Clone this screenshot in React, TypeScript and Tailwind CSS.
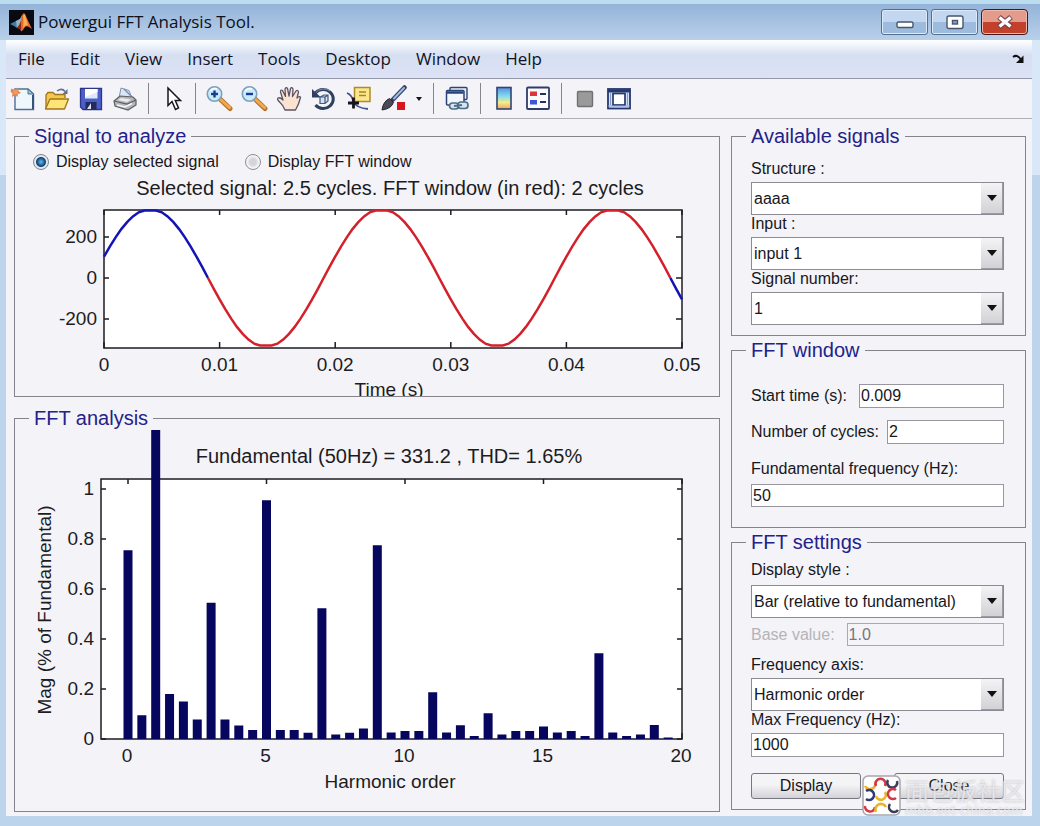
import type { ReactNode } from "react";

const menus = ["File", "Edit", "View", "Insert", "Tools", "Desktop", "Window", "Help"];

// Magnitudes in % of the fundamental, one every half harmonic
const bars = [
  0.755, 0.095, 1.236, 0.18, 0.15, 0.078, 0.545, 0.078, 0.054, 0.036, 0.955,
  0.036, 0.036, 0.025, 0.523, 0.018, 0.025, 0.042, 0.775, 0.026, 0.032, 0.032,
  0.187, 0.026, 0.055, 0.012, 0.103, 0.018, 0.032, 0.032, 0.05, 0.026, 0.032,
  0.012, 0.343, 0.026, 0.012, 0.018, 0.056, 0.006,
];

const MatlabLogo = () => (
  <svg viewBox="0 0 25 25" className="h-[25px] w-[25px] shrink-0">
    <rect width="25" height="25" fill="#0a0a12" />
    <path d="M1 14 L7 11 L11 9 L14 4 L11 13 L8 18 L5 16Z" fill="#3f7fa6" />
    <path d="M7 11 L11 9 L13 5 L12 13 L8 18Z" fill="#8fb9c9" />
    <path d="M8 18 Q12 12 13 6 Q14 2 16 4 Q19 11 23 19 Q18 15 16 17 Q13 22 12 21 Q11 18 8 18Z" fill="#e8682a" />
    <path d="M14 6 Q15 3 16 5 Q18 11 19 15 Q16 15 14 18 Q15 12 14 6Z" fill="#f9b050" />
    <path d="M8 18 Q11 15 12 11 L12 20 Q11 18 8 18Z" fill="#8a2318" />
  </svg>
);

const ToolButton = ({ label, children }: { label: string; children: ReactNode }) => (
  <button aria-label={label} className="flex h-8 w-[34px] items-center justify-center">
    <svg viewBox="0 0 28 28" className="h-7 w-7" fill="none">
      {children}
    </svg>
  </button>
);

const Separator = () => <div className="mx-1.5 h-[31px] w-px bg-[#85858c]" />;

const Magnifier = ({ plus }: { plus?: boolean }) => (
  <>
    <path d="M15 14 L25 23.5" stroke="#b8702a" strokeWidth="5" strokeLinecap="round" />
    <path d="M15 14 L24.6 22.7" stroke="#f0a94e" strokeWidth="3" strokeLinecap="round" />
    <circle cx="9.5" cy="9" r="7.2" fill="#c9ecf8" stroke="#7aa2bf" strokeWidth="1.6" />
    <path d="M5 6 Q8 2.500 12 4" stroke="#fff" strokeWidth="1.500" />
    <path d="M6 9 H13" stroke="#183c94" strokeWidth="2.4" />
    {plus && <path d="M9.500 5.500 V12.500" stroke="#183c94" strokeWidth="2.4" />}
  </>
);

const Toolbar = () => (
  <div className="flex h-10 items-center border-b border-[#aeb0b6]">
    <div className="flex">
      <ToolButton label="New Figure">
        <path d="M6 4 H19 L24.500 9 V24.500 H6Z" fill="#eef8fc" stroke="#4d6f94" strokeWidth="1.400" />
        <path d="M19 4 V9 H24.500Z" fill="#9fc4dc" stroke="#4d6f94" />
        <path d="M24 10 V24" stroke="#35527c" strokeWidth="2" />
        <path d="M2.500 3.500 L6 5 L9 2.500 L9.500 6 L12 8 L9 9 L8.500 12 L6 10 L3 12 L3.500 8.500 L1.500 6.500Z" fill="#e5824a" />
        <circle cx="6.500" cy="7" r="2.500" fill="#ef9a63" />
      </ToolButton>
      <ToolButton label="Open File">
        <path d="M3 23 V10 L5 7.500 H10 L12 9.500 H22 V13" fill="#f6c84a" stroke="#a3741b" strokeWidth="1.300" />
        <path d="M2.500 24 L7 14 H25.500 L21.500 24Z" fill="#ffe477" stroke="#a3741b" strokeWidth="1.300" strokeLinejoin="round" />
        <path d="M14 6 Q19 2.500 22 6.500" stroke="#5f7192" strokeWidth="1.500" />
        <path d="M24.500 4 V9 H19.500Z" fill="#5f7192" />
      </ToolButton>
      <ToolButton label="Save Figure">
        <path d="M3.500 3.500 H24.500 V24.500 H6 L3.500 22Z" fill="#4c5fc9" stroke="#2c358c" strokeWidth="1.300" />
        <rect x="8" y="4" width="12.500" height="9.500" fill="#dfeaf9" />
        <path d="M8 4 H20.500 V7 L8 12Z" fill="#fff" />
        <rect x="8.500" y="17" width="11" height="7.500" fill="#232b5c" />
        <path d="M10 24 L14 18 V24Z" fill="#dbe3f5" />
      </ToolButton>
      <ToolButton label="Print Figure">
        <path d="M8 13 L10 3 L18 5.500 L21 13Z" fill="#d9e8f8" stroke="#8791a8" />
        <path d="M13 4 L21 12" stroke="#7d8fb4" strokeWidth="1.500" />
        <path d="M3 16 L9 11 L22 12 L25 15 V20 L17 25 L4 21Z" fill="#b5b6bb" stroke="#5d5e66" strokeWidth="1.200" />
        <path d="M3 16 L16 19 L25 15" stroke="#5d5e66" strokeWidth="1.200" />
        <path d="M10 13 L20 14.500 L16 17 L7 15Z" fill="#ececef" />
        <path d="M6 20 L14 22 L21 18.500" stroke="#f7f7f7" strokeWidth="1.500" />
      </ToolButton>
    </div>
    <Separator />
    <ToolButton label="Edit Plot">
      <path d="M10 3 V20.500 L14 16.500 L17.500 24.500 L20.500 23 L17.300 15.500 H22.500Z" fill="#fff" stroke="#16161c" strokeWidth="1.500" />
    </ToolButton>
    <Separator />
    <div className="flex gap-px">
      <ToolButton label="Zoom In">
        <Magnifier plus />
      </ToolButton>
      <ToolButton label="Zoom Out">
        <Magnifier />
      </ToolButton>
      <ToolButton label="Pan">
        <path
          d="M10 25 Q8 20 5 17.500 Q1.500 14 3 13 Q5 12 8 15 L5.500 7 Q5.500 4.500 7.500 5.500 L10.500 11.500 L10 4 Q11 1.500 12.500 3.500 L14 11 L15.500 3.500 Q17 1.500 18 4 L17.500 11.500 L21 6 Q23 4.500 23.500 7 L22 13 Q25 10.500 25.500 12.500 Q24 19 20.500 25Z"
          fill="#fbe3d2" stroke="#5c5466" strokeWidth="1.300" strokeLinejoin="round"
        />
      </ToolButton>
      <ToolButton label="Rotate 3D">
        <path d="M5.500 8 A10 9.500 0 1 1 5.500 20" stroke="#2f405f" strokeWidth="3" />
        <path d="M5.500 8 A10 9.500 0 0 1 20 6" stroke="#8492ae" strokeWidth="1" />
        <path d="M2 4 V12.500 H11Z" fill="#2f405f" />
        <path d="M10 12 L14 10 H18 V16 L15 18.500 H10Z M10 12 H15 V18.500 M15 12 L18 10" fill="#d4e0f2" stroke="#43587f" strokeWidth="1.200" />
      </ToolButton>
      <ToolButton label="Data Cursor">
        <path d="M2 8 Q7 10 8 16 Q11 23 23 24" stroke="#44558a" strokeWidth="1.800" />
        <rect x="9.500" y="2.500" width="15.500" height="14" fill="#fbe78a" stroke="#b08a2a" strokeWidth="1.500" />
        <path d="M14 7 H21 M14 10.500 H21" stroke="#a8842f" strokeWidth="1.500" />
        <path d="M8.500 12.500 V23.500 M3 18 H14" stroke="#15151d" strokeWidth="2.800" />
      </ToolButton>
      <ToolButton label="Brush Data">
        <path d="M24.500 2.500 L13 14.500" stroke="#30446c" strokeWidth="4.500" strokeLinecap="round" />
        <path d="M24 3 L14 13.500" stroke="#a4b9dc" strokeWidth="2" strokeLinecap="round" />
        <path d="M2 25 Q3 16.500 9.500 13.500 L13.500 17 Q12 23.500 2 25Z" fill="#4b4b55" stroke="#24242c" />
        <rect x="17" y="17" width="8" height="8" fill="#d8151c" />
      </ToolButton>
    </div>
    <button aria-label="Brush options" className="flex h-8 w-4 items-center justify-center">
      <svg viewBox="0 0 6 4" className="h-1 w-1.5">
        <path d="M0 0 H6 L3 4Z" fill="#15151d" />
      </svg>
    </button>
    <Separator />
    <ToolButton label="Link Plot">
      <rect x="7" y="2.500" width="17" height="12" rx="1" fill="#e8f1fb" stroke="#2c4475" strokeWidth="1.400" />
      <rect x="3.500" y="5.500" width="17.500" height="14.500" rx="1" fill="#f1f7fd" stroke="#2c4475" strokeWidth="1.500" />
      <path d="M4 7.500 H20.500" stroke="#2c4475" strokeWidth="2.500" />
      <rect x="6.500" y="18" width="9" height="6" rx="3" fill="#d7e6ee" stroke="#4d6e88" strokeWidth="1.700" />
      <rect x="15" y="17" width="10" height="6.500" rx="3" fill="#d7e6ee" stroke="#4d6e88" strokeWidth="1.700" />
      <path d="M11 21 L19 20" stroke="#4d6e88" strokeWidth="1.800" />
    </ToolButton>
    <Separator />
    <ToolButton label="Insert Colorbar">
      <defs>
        <linearGradient id="colorbar" x1="0" y1="0" x2="0" y2="1">
          <stop offset="0" stopColor="#5b8fe0" />
          <stop offset="0.4" stopColor="#7fdcf0" />
          <stop offset="0.7" stopColor="#f6ec8a" />
          <stop offset="1" stopColor="#f2a364" />
        </linearGradient>
      </defs>
      <rect x="7" y="2.500" width="14" height="21.500" fill="url(#colorbar)" stroke="#2f4472" strokeWidth="1.600" />
    </ToolButton>
    <ToolButton label="Insert Legend">
      <rect x="3" y="2.500" width="22" height="21.500" rx="1" fill="#fafbff" stroke="#2f3c66" strokeWidth="1.800" />
      <rect x="6" y="6.500" width="7" height="4.500" fill="#e0343c" />
      <rect x="6" y="15" width="7" height="4.500" fill="#3e55d8" />
      <path d="M16 9 H22 M16 17 H22" stroke="#26305a" strokeWidth="1.800" />
    </ToolButton>
    <Separator />
    <ToolButton label="Hide Plot Tools">
      <rect x="6.500" y="6.500" width="15" height="15" rx="1" fill="#9a9a9a" stroke="#707072" strokeWidth="1.400" />
    </ToolButton>
    <ToolButton label="Show Plot Tools">
      <rect x="3" y="4" width="22" height="19.500" fill="#dfe8fa" stroke="#24386f" strokeWidth="1.800" />
      <path d="M3 6 H25" stroke="#24386f" strokeWidth="3" />
      <rect x="8" y="8.500" width="12" height="11.500" fill="#fff" stroke="#24386f" strokeWidth="1.700" />
      <path d="M3 21 H25 M5.500 8 V20 M22.500 8 V20" stroke="#8398cb" strokeWidth="1.200" />
    </ToolButton>
  </div>
);

const TitleBar = () => (
  <header className="flex h-10 items-center border-t-4 border-[#bcdcf0] bg-linear-to-b from-[#94b3d8] to-[#b9d0ea] pr-3 pl-[9px]">
    <MatlabLogo />
    <h1 className="ml-1 flex-1 font-['Open_Sans',sans-serif] text-[17px] leading-6 text-[#0c1020]">
      Powergui FFT Analysis Tool.
    </h1>
    <div className="flex gap-[3px]">
      <button aria-label="Minimize" className="flex h-[26px] w-[47px] items-center justify-center rounded-[3px] border border-[#54708f] bg-linear-to-b from-[#c3d8f0] from-50% to-[#9dbbdc] to-50% shadow-[inset_0_0_0_1px_#dcebf9]">
        <svg viewBox="0 0 18 18" className="h-[18px] w-[18px]">
          <rect x="1" y="9" width="16" height="5.500" rx="1.500" fill="#fff" stroke="#47566d" strokeWidth="1.400" />
        </svg>
      </button>
      <button aria-label="Maximize" className="flex h-[26px] w-[47px] items-center justify-center rounded-[3px] border border-[#54708f] bg-linear-to-b from-[#c3d8f0] from-50% to-[#9dbbdc] to-50% shadow-[inset_0_0_0_1px_#dcebf9]">
        <svg viewBox="0 0 18 18" className="h-[18px] w-[18px]">
          <rect x="1" y="3" width="16" height="12.500" rx="2" fill="#fff" stroke="#47566d" strokeWidth="1.400" />
          <rect x="6.500" y="7.500" width="5" height="3.500" fill="#8aa5c6" stroke="#47566d" strokeWidth="1.400" />
        </svg>
      </button>
      <button aria-label="Close window" className="flex h-[26px] w-[47px] items-center justify-center rounded-[4px] border border-[#4a1717] bg-linear-to-b from-[#e39b8c] from-50% to-[#c2402c] to-50% shadow-[inset_0_0_0_1px_#f0b9ac]">
        <svg viewBox="0 0 18 18" className="h-[18px] w-[18px]">
          <path d="M3 4 L15 14 M15 4 L3 14" stroke="#6b4048" strokeWidth="5.500" />
          <path d="M3.500 4.500 L14.500 13.500 M14.500 4.500 L3.500 13.500" stroke="#fff" strokeWidth="3.500" />
        </svg>
      </button>
    </div>
  </header>
);

const MenuBar = () => (
  <nav className="flex h-[39px] items-center justify-between border-b border-[#9297a6] bg-linear-to-b from-white via-[#d6dff1] via-40% to-[#dde2f6] pr-2 pl-3 font-['Open_Sans',sans-serif] text-[17px] leading-6 text-[#10131f]">
    <div className="flex gap-[25px]">
      {menus.map((menu) => (
        <button key={menu}>{menu}</button>
      ))}
    </div>
    <button aria-label="Dock figure">
      <svg viewBox="0 0 12 10" className="h-2.5 w-3" fill="none">
        <path d="M1 3 Q5 0 8.500 5" stroke="#111" strokeWidth="2" />
        <path d="M11.500 1.500 V9 H4Z" fill="#111" />
      </svg>
    </button>
  </nav>
);

const Panel = ({ title, className, children }: { title: string; className?: string; children: ReactNode }) => (
  <fieldset className={`min-w-0 border border-[#85848c] ${className ?? ""}`}>
    <legend className="ml-[14px] px-[5px] text-[20px] leading-5 text-[#22228a]">{title}</legend>
    {children}
  </fieldset>
);

const Select = ({ id, value }: { id: string; value: string }) => (
  <div className="relative">
    <select
      id={id}
      defaultValue={value}
      className="block h-[33px] w-full appearance-none border border-[#8c8b93] bg-white pr-6 pl-0.5"
    >
      <option>{value}</option>
    </select>
    <span className="pointer-events-none absolute inset-y-px right-px flex w-[22px] items-center justify-center border-r border-b border-[#9b9ba1] bg-linear-to-b from-[#f4f4f6] to-[#d2d2d6]">
      <svg viewBox="0 0 10 6" className="h-1.5 w-2.5">
        <path d="M0 0 H10 L5 6Z" fill="#111" />
      </svg>
    </span>
  </div>
);

const signalAt = (t: number) => {
  const v = Math.sin(2 * Math.PI * 50 * t + Math.PI / 10) * 337;
  return Math.max(-329, Math.min(329, v));
};

const trace = (from: number, to: number) => {
  const n = Math.round((to - from) / 0.0005);
  return Array.from({ length: n + 1 }, (_, i) => {
    const t = from + i * 0.0005;
    return `${(104 + t * 11560).toFixed(1)},${(278 - signalAt(t) * 0.205).toFixed(1)}`;
  }).join(" ");
};

const SignalPlot = () => (
  <svg viewBox="15 176 704 220" className="block w-full" fill="#1c1c22" fontSize="19">
    <text x="390" y="195" fontSize="20" textAnchor="middle">
      Selected signal: 2.5 cycles. FFT window (in red): 2 cycles
    </text>
    <rect x="104" y="210" width="578" height="138" fill="#fff" stroke="#1c1c22" strokeWidth="1.500" />
    {[0, 1, 2, 3, 4, 5].map((n) => {
      const x = 104 + n * 115.6;
      return (
        <g key={n}>
          <path d={`M${x} 210 v5 M${x} 348 v-6`} stroke="#1c1c22" strokeWidth="1.500" />
          <text x={x} y="371" textAnchor="middle">
            {n === 0 ? "0" : `0.0${n}`}
          </text>
        </g>
      );
    })}
    {[200, 0, -200].map((v) => {
      const y = 278 - v * 0.205;
      return (
        <g key={v}>
          <path d={`M104 ${y} h5 M682 ${y} h-6`} stroke="#1c1c22" strokeWidth="1.500" />
          <text x="97" y={y + 6} textAnchor="end">
            {v}
          </text>
        </g>
      );
    })}
    <g fill="none" strokeWidth="2.500">
      <polyline points={trace(0, 0.009)} stroke="#1414b4" />
      <polyline points={trace(0.009, 0.049)} stroke="#d3202a" />
      <polyline points={trace(0.049, 0.05)} stroke="#1414b4" />
    </g>
    <text x="389" y="396" textAnchor="middle">
      Time (s)
    </text>
  </svg>
);

const SpectrumPlot = () => (
  <svg viewBox="15 428 704 383" className="block w-full" fill="#1c1c22" fontSize="19">
    <text x="389" y="463" fontSize="20" textAnchor="middle">
      Fundamental (50Hz) = 331.2 , THD= 1.65%
    </text>
    <rect x="101" y="479" width="581" height="260" fill="#fff" stroke="#1c1c22" strokeWidth="1.500" />
    {[0, 5, 10, 15, 20].map((n) => {
      const x = 128 + n * 27.7;
      return (
        <g key={n}>
          <path d={`M${x} 479 v5 M${x} 739 v-6`} stroke="#1c1c22" strokeWidth="1.500" />
          <text x={x - 1} y="762" textAnchor="middle">
            {n}
          </text>
        </g>
      );
    })}
    {[0, 0.2, 0.4, 0.6, 0.8, 1].map((v) => {
      const y = 739 - v * 250;
      return (
        <g key={v}>
          <path d={`M101 ${y} h5 M682 ${y} h-5`} stroke="#1c1c22" strokeWidth="1.500" />
          <text x="94" y={y + 6} textAnchor="end">
            {v}
          </text>
        </g>
      );
    })}
    {bars.map((v, i) => (
      <rect
        key={i}
        x={123.5 + i * 13.85}
        y={739 - v * 250}
        width="9"
        height={v * 250}
        fill="#06065e"
      />
    ))}
    <text x="390" y="788" textAnchor="middle">
      Harmonic order
    </text>
    <text transform="translate(51 610) rotate(-90)" textAnchor="middle">
      Mag (% of Fundamental)
    </text>
  </svg>
);

const arcs = [
  ["#e9b52e", "M3 11 A5 5 0 0 0 13 6"],
  ["#d23a4a", "M14 11 A5 5 0 1 1 23 11"],
  ["#3c3c5c", "M26 5 A5 5 0 1 0 35 6"],
  ["#2e3a7a", "M4 16 A5 5 0 1 1 4 24"],
  ["#e9b52e", "M14 21 A5 5 0 1 0 23 17"],
  ["#d23a4a", "M34 15 A5 5 0 1 0 34 23"],
  ["#d23a4a", "M3 31 A5 5 0 1 0 13 32"],
  ["#e9b52e", "M14 37 A5 5 0 1 1 24 32"],
  ["#3c3c5c", "M28 29 A5 5 0 1 0 36 35"],
];

const Watermark = () => (
  <div className="pointer-events-none absolute right-[15px] bottom-2.5 flex items-center gap-1">
    <svg viewBox="0 0 39 41" className="h-[41px] w-[39px]">
      <rect x="1" y="1" width="37" height="39" rx="5" fill="#fff" stroke="#a6a6ac" strokeWidth="1.500" />
      <g fill="none" strokeWidth="2.600">
        {arcs.map(([color, d]) => (
          <path key={d} d={d} stroke={color} />
        ))}
      </g>
    </svg>
    <div className="font-['Noto_Sans_CJK_SC',sans-serif] text-white/60 [text-shadow:0_0_2px_#b4b4bc]">
      <p className="text-[24px] leading-7">面包板社区</p>
      <p className="text-[13px] leading-3">mbb.eet-china.com</p>
    </div>
  </div>
);

const App = () => {
  return (
    <div className="relative min-h-screen bg-linear-to-b from-[#d8e8f8] from-[175px] to-[#bcd4ec] to-[175px] pb-2 font-['Liberation_Sans',Arial,sans-serif] text-[16px] leading-[18px] text-[#17171d]">
      <TitleBar />
      <main className="mr-2 ml-1.5 bg-[#f4f3f8] pb-1">
        <MenuBar />
        <Toolbar />
        <div className="flex gap-[11px] pt-[7px] pr-1.5 pl-2">
          <div className="flex min-w-0 flex-1 flex-col gap-[11px]">
            <Panel title="Signal to analyze">
              <div className="flex h-[30px] items-center gap-[26px] pt-0.5 pl-[18px]">
                <label className="flex items-center gap-[7px]">
                  <input
                    type="radio"
                    name="view"
                    defaultChecked
                    className="h-4 w-4 appearance-none rounded-full border border-[#7d8490] bg-[#f2f6fa] checked:bg-[radial-gradient(circle,#4ba8dc_10%,#123a6c_45%,#dfe9f2_55%)]"
                  />
                  Display selected signal
                </label>
                <label className="flex items-center gap-[7px]">
                  <input
                    type="radio"
                    name="view"
                    className="h-4 w-4 appearance-none rounded-full border border-[#8b8e96] bg-[radial-gradient(circle,#d4d5d9_30%,#f4f4f6_60%)] checked:bg-[radial-gradient(circle,#4ba8dc_10%,#123a6c_45%,#dfe9f2_55%)]"
                  />
                  Display FFT window
                </label>
              </div>
              <SignalPlot />
            </Panel>
            <Panel title="FFT analysis">
              <SpectrumPlot />
            </Panel>
          </div>

          <div className="flex w-[295px] shrink-0 flex-col gap-1">
            <Panel title="Available signals" className="pb-2.5">
              <div className="flex flex-col pt-3.5 pr-[21px] pl-[19px]">
                <label htmlFor="structure" className="mb-1">Structure :</label>
                <Select id="structure" value="aaaa" />
                <label htmlFor="input" className="mb-1">Input :</label>
                <Select id="input" value="input 1" />
                <label htmlFor="number" className="mb-1">Signal number:</label>
                <Select id="number" value="1" />
              </div>
            </Panel>

            <Panel title="FFT window" className="pb-5">
              <div className="flex flex-col pt-6 pr-[21px] pl-[19px]">
                <div className="flex items-center gap-3">
                  <label htmlFor="start">Start time (s):</label>
                  <input id="start" defaultValue="0.009" className="h-6 min-w-0 flex-1 border border-[#98979f] bg-white px-px" />
                </div>
                <div className="mt-3 flex items-center gap-2">
                  <label htmlFor="cycles">Number of cycles:</label>
                  <input id="cycles" defaultValue="2" className="h-6 min-w-0 flex-1 border border-[#98979f] bg-white px-px" />
                </div>
                <label htmlFor="fundamental" className="mt-4 mb-1.5">Fundamental frequency (Hz):</label>
                <input id="fundamental" defaultValue="50" className="h-[23px] border border-[#98979f] bg-white px-px" />
              </div>
            </Panel>

            <Panel title="FFT settings" className="pb-2.5">
              <div className="flex flex-col pt-[9px] pr-[21px] pl-[19px]">
                <label htmlFor="style" className="mb-1.5">Display style :</label>
                <Select id="style" value="Bar (relative to fundamental)" />
                <div className="mt-[5px] flex items-center gap-3">
                  <label htmlFor="base" className="text-[#b4b3ba]">Base value:</label>
                  <input id="base" disabled defaultValue="1.0" className="h-[23px] min-w-0 flex-1 border border-[#aaa9b1] bg-[#f4f3f8] px-px text-[#77767e]" />
                </div>
                <label htmlFor="axis" className="mt-2.5 mb-1">Frequency axis:</label>
                <Select id="axis" value="Harmonic order" />
                <label htmlFor="max" className="mb-1">Max Frequency (Hz):</label>
                <input id="max" defaultValue="1000" className="h-6 border border-[#98979f] bg-white px-px" />
                <div className="mt-4 flex justify-between">
                  <button className="h-[26px] w-[110px] rounded-[3px] border border-[#77767e] bg-linear-to-b from-[#f4f4f6] from-45% to-[#d2d2d8]">
                    Display
                  </button>
                  <button className="h-[26px] w-[110px] rounded-[3px] border border-[#77767e] bg-linear-to-b from-[#f4f4f6] from-45% to-[#d2d2d8]">
                    Close
                  </button>
                </div>
              </div>
            </Panel>
          </div>
        </div>
      </main>
      <Watermark />
    </div>
  );
};

export default App;
